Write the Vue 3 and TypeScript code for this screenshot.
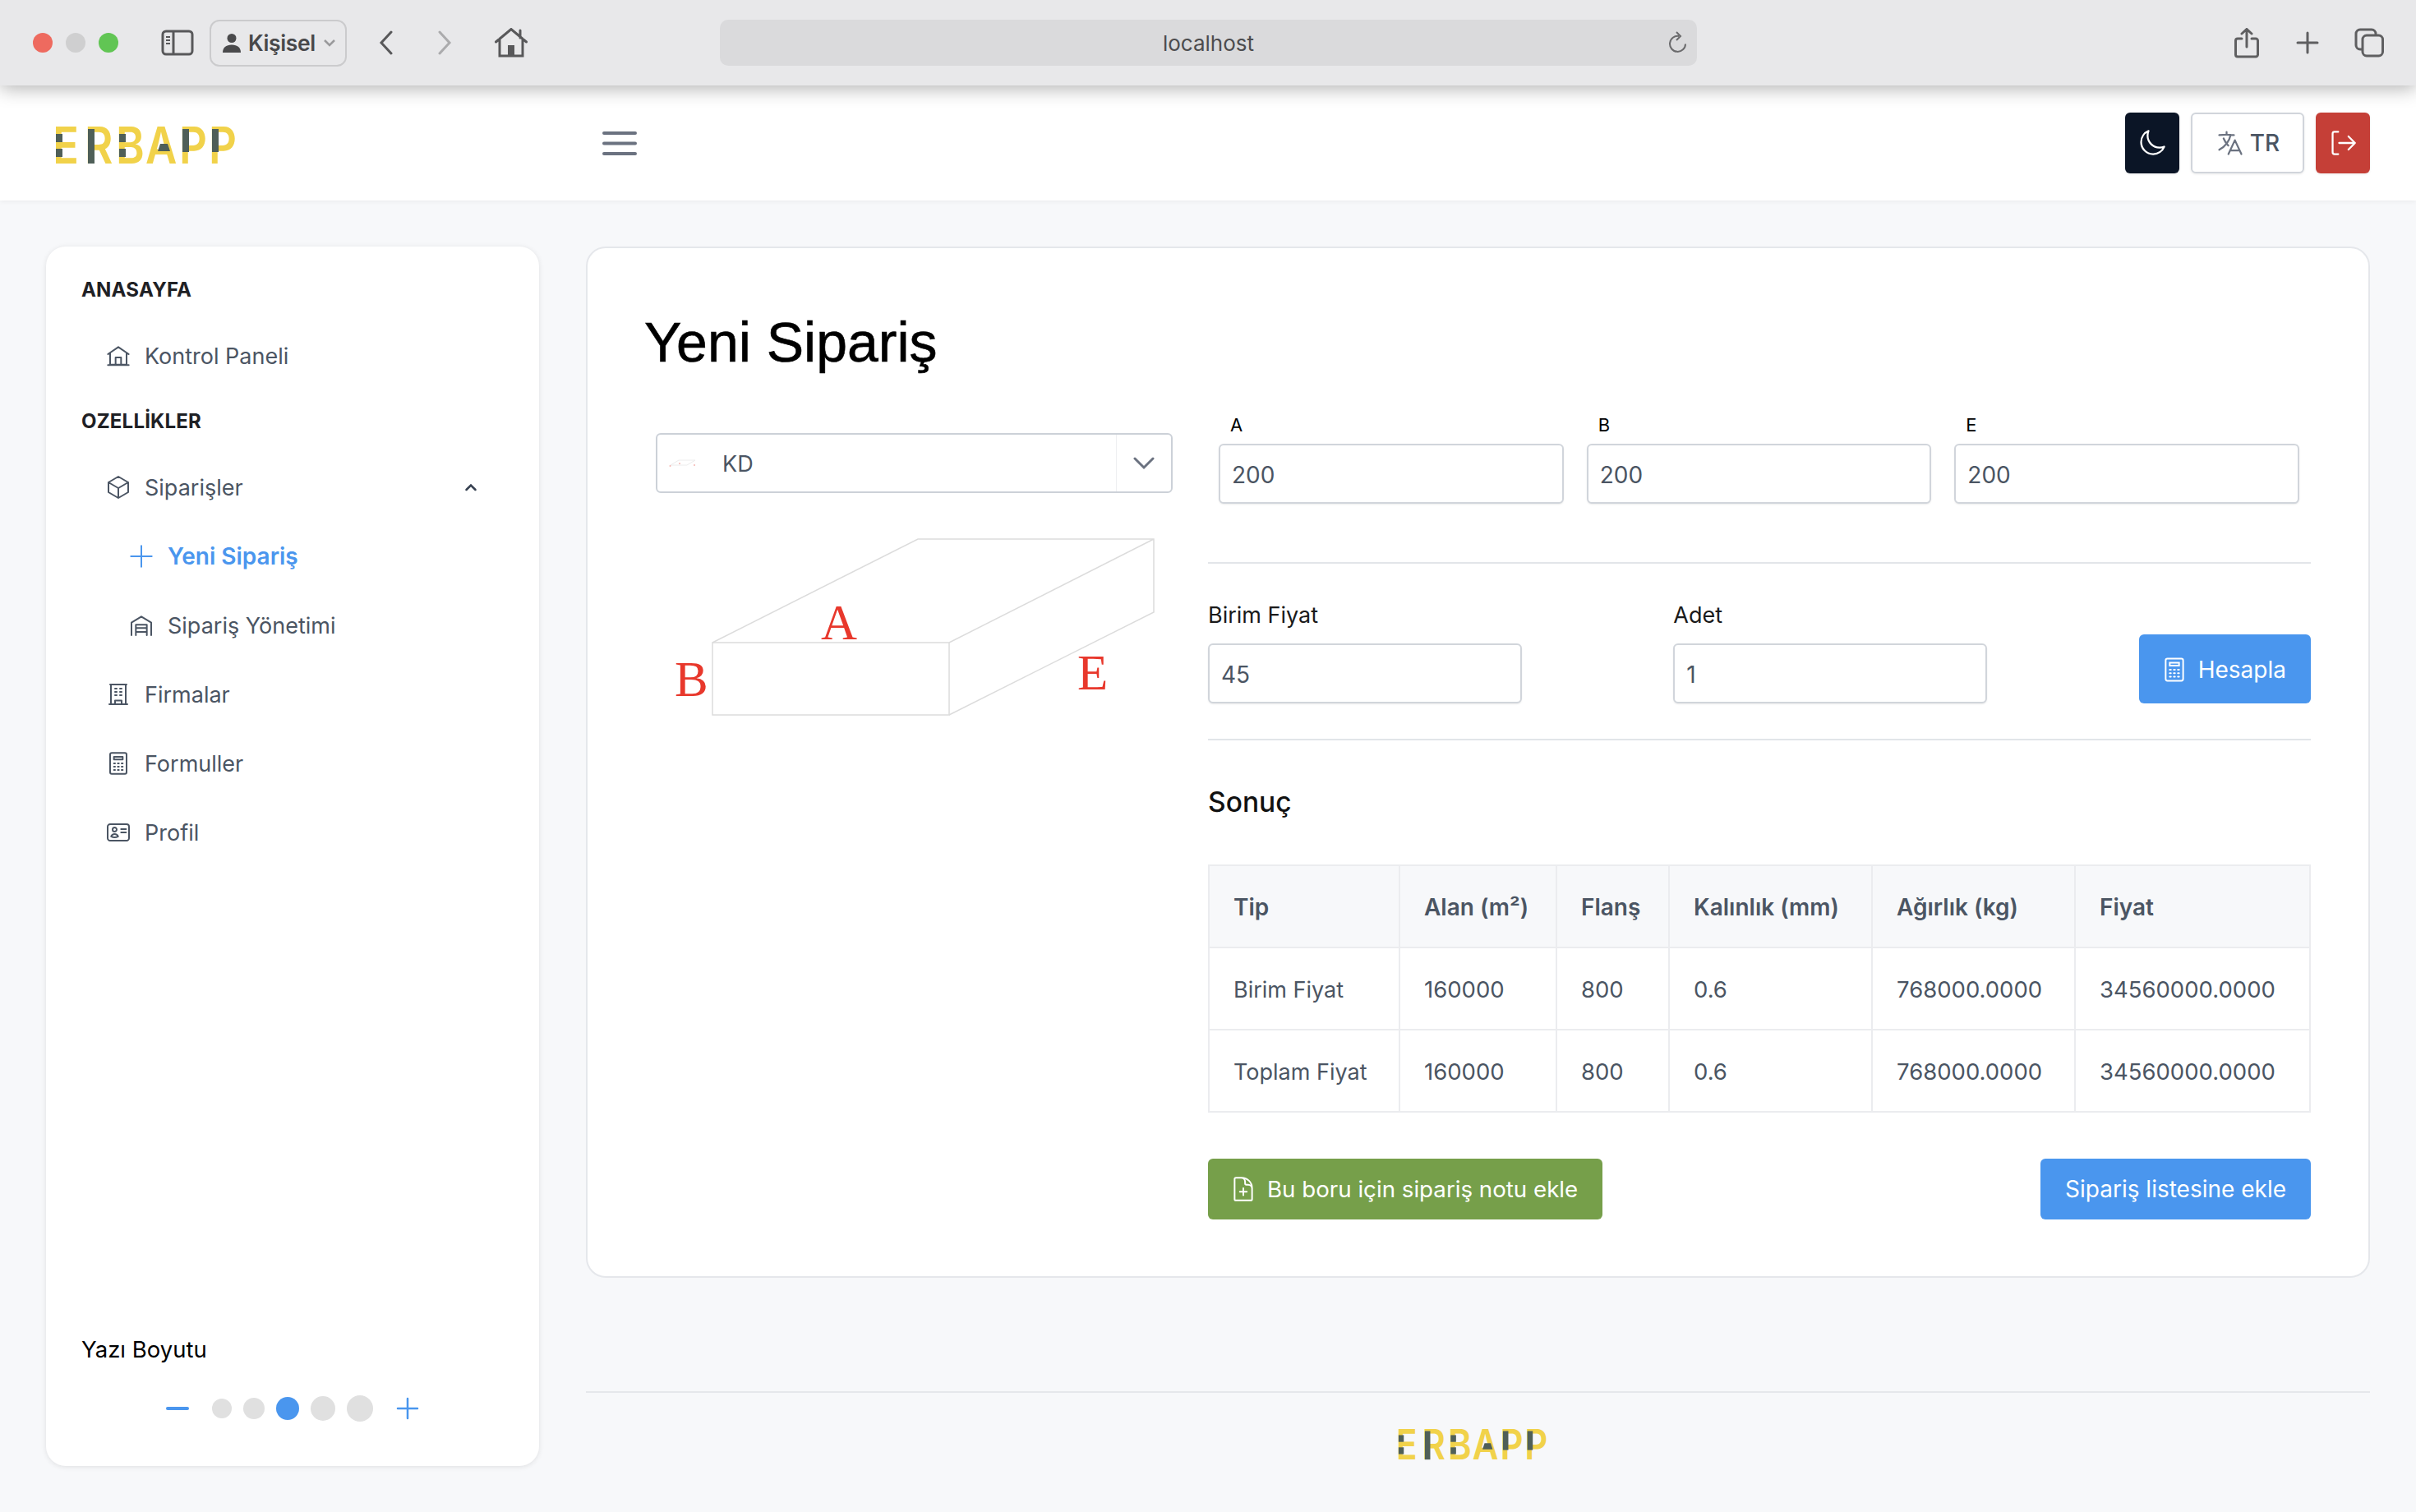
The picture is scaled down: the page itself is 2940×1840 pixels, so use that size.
<script setup lang="ts">
interface NavItem {
  label: string;
  icon: string;
  sub?: boolean;
  active?: boolean;
  open?: boolean;
}

const icons: Record<string, string> = {
  home: 'M2.500 10.500 12 4l9.500 6.500M4.500 9.500V20h15V9.500M9.500 20v-6.500h5V20M2.500 20.500h19',
  cube: 'M21 7.500l-9-5.250L3 7.500m18 0l-9 5.250m9-5.250v9l-9 5.250M3 7.500l9 5.250M3 7.500v9l9 5.250m0-9v9',
  plus: 'M12 2.500v19M2.500 12h19',
  stock: 'M3 21V9.500L12 4l9 5.500V21M7 21V11.500h10V21M7 14.500h10M7 18h10',
  building: 'M3.750 21h16.500M4.500 3h15M5.250 3v18m13.500-18v18M9 6.750h1.500m-1.500 3h1.500m-1.500 3h1.500m3-6H15m-1.500 3H15m-1.500 3H15M9 21v-3.375h6V21',
  calc: 'M6 2.500h12a1.500 1.500 0 011.500 1.500v16a1.500 1.500 0 01-1.500 1.500H6A1.500 1.500 0 014.500 20V4A1.500 1.500 0 016 2.500zM8 6h8v2.500H8zM8 12h1m2.500 0h1m2.500 0h1M8 15h1m2.500 0h1m2.500 0h1M8 18h1m2.500 0h1m2.500 0h1',
  card: 'M14.500 9h4.500M14.500 12h4.500M4.500 19.500h15a2.250 2.250 0 002.250-2.250V6.750A2.250 2.250 0 0019.500 4.500h-15a2.250 2.250 0 00-2.250 2.250v10.500A2.250 2.250 0 004.500 19.500zm6-10.125a1.875 1.875 0 11-3.750 0 1.875 1.875 0 013.750 0zm1.294 6.336a6.721 6.721 0 01-3.170.789 6.721 6.721 0 01-3.168-.789 3.376 3.376 0 016.338 0z',
};

const homeNav: NavItem[] = [{ label: 'Kontrol Paneli', icon: 'home' }];
const featureNav: NavItem[] = [
  { label: 'Siparişler', icon: 'cube', open: true },
  { label: 'Yeni Sipariş', icon: 'plus', sub: true, active: true },
  { label: 'Sipariş Yönetimi', icon: 'stock', sub: true },
  { label: 'Firmalar', icon: 'building' },
  { label: 'Formuller', icon: 'calc' },
  { label: 'Profil', icon: 'card' },
];

const sizeDots = [
  { size: 24, active: false },
  { size: 26, active: false },
  { size: 28, active: true },
  { size: 30, active: false },
  { size: 32, active: false },
];

const dimensions = [
  { label: 'A', value: '200' },
  { label: 'B', value: '200' },
  { label: 'E', value: '200' },
];

const columns = ['Tip', 'Alan (m²)', 'Flanş', 'Kalınlık (mm)', 'Ağırlık (kg)', 'Fiyat'];
const rows = [
  ['Birim Fiyat', '160000', '800', '0.6', '768000.0000', '34560000.0000'],
  ['Toplam Fiyat', '160000', '800', '0.6', '768000.0000', '34560000.0000'],
];
</script>

<template>
  <div class="page">
    <div class="browser-bar">
      <span class="light red" />
      <span class="light grey" />
      <span class="light green" />
      <svg class="tool sidebar-toggle" viewBox="0 0 40 32" fill="none" stroke="#58585a" stroke-width="3">
        <rect x="2" y="2" width="36" height="28" rx="4" />
        <path d="M15 2v28" />
        <path d="M6 9h5M6 13h5M6 17h5" stroke-width="2" />
      </svg>
      <div class="profile">
        <svg width="22" height="24" viewBox="0 0 22 24" fill="#4a4a4c">
          <circle cx="11" cy="6.500" r="5.500" />
          <path d="M0 24c0-6 4-9.500 11-9.500S22 18 22 24z" />
        </svg>
        <span>Kişisel</span>
        <svg width="16" height="10" viewBox="0 0 16 10" fill="none" stroke="#9a9a9c" stroke-width="2.500">
          <path d="M2 2l6 6 6-6" />
        </svg>
      </div>
      <svg class="tool back" viewBox="0 0 20 30" fill="none" stroke="#58585a" stroke-width="3" stroke-linecap="round">
        <path d="M16 2 4 15l12 13" />
      </svg>
      <svg class="tool forward" viewBox="0 0 20 30" fill="none" stroke="#ababad" stroke-width="3" stroke-linecap="round">
        <path d="M4 2l12 13L4 28" />
      </svg>
      <svg class="tool house" viewBox="0 0 40 36" fill="none" stroke="#58585a" stroke-width="3" stroke-linecap="round">
        <path d="M1.500 17 20 1.500 38.500 17M6 13v21h28V13M31 3v9" />
        <path d="M16 34V21h8v13z" fill="#58585a" stroke="none" />
      </svg>
      <div class="url-bar">
        <span>localhost</span>
        <svg class="reload" width="24" height="28" viewBox="0 0 24 28" fill="none" stroke="#6a6a6c" stroke-width="2">
          <path d="M14 6a9.500 9.500 0 1 0 8 9.500" />
          <path d="M11 1l5 5-5 5" />
        </svg>
      </div>
      <svg class="tool share" viewBox="0 0 30 37" fill="none" stroke="#5f5f61" stroke-width="3" stroke-linecap="round">
        <path d="M9 13H4a2.500 2.500 0 00-2.500 2.500v17A2.500 2.500 0 004 35h22a2.500 2.500 0 002.500-2.500v-17A2.500 2.500 0 0026 13h-5M15 23V2M9 7l6-5.500L21 7" />
      </svg>
      <svg class="tool new-tab" viewBox="0 0 28 28" fill="none" stroke="#5f5f61" stroke-width="3" stroke-linecap="round">
        <path d="M14 2v24M2 14h24" />
      </svg>
      <svg class="tool tabs" viewBox="0 0 36 36" fill="none" stroke="#5f5f61" stroke-width="3">
        <rect x="10" y="9" width="24.500" height="25" rx="5" />
        <path d="M10 26H7a5 5 0 01-5-5V7a5 5 0 015-5h14a5 5 0 015 5v2" />
      </svg>
    </div>

    <header class="app-header">
      <div class="logo-slot">
        <svg class="logo" viewBox="0 0 220 46">
          <symbol id="erbapp-logo" viewBox="0 0 220 46">
            <g transform="scale(0.85 1)">
              <text class="logo-text" x="-4.700 41.200 85.900 128.200 176.500 218.800" y="45">ERBAPP</text>
            </g>
            <rect class="logo-dark" x="0" y="9" width="8" height="10" />
            <rect class="logo-dark" x="0" y="27" width="8" height="10" />
            <rect class="logo-dark" x="39" y="3" width="8" height="42" />
            <rect class="logo-dark" x="77" y="9" width="8" height="10" />
            <rect class="logo-dark" x="77" y="27" width="8" height="10" />
            <polygon class="logo-dark" points="127,21 136,21 139,30 124,30" />
            <rect class="logo-dark" x="154" y="3" width="8" height="28" />
            <rect class="logo-dark" x="190" y="3" width="8" height="28" />
          </symbol>
          <use href="#erbapp-logo" />
        </svg>
      </div>
      <svg class="hamburger" width="42" height="29" viewBox="0 0 42 29" stroke="#6b7280" stroke-width="4" stroke-linecap="round">
        <path d="M2 2h38M2 14.500h38M2 27h38" />
      </svg>
      <div class="header-actions">
        <button class="action dark">
          <svg width="36" height="36" viewBox="0 0 24 24" fill="none" stroke="#fff" stroke-width="1.500" stroke-linecap="round" stroke-linejoin="round">
            <path d="M21.752 15.002A9.718 9.718 0 0118 15.750c-5.385 0-9.750-4.365-9.750-9.750 0-1.330.266-2.597.748-3.752A9.753 9.753 0 003 11.250C3 16.635 7.365 21 12.750 21a9.753 9.753 0 009.002-5.998z" />
          </svg>
        </button>
        <button class="action lang">
          <svg width="36" height="36" viewBox="0 0 24 24" fill="none" stroke="#6b7280" stroke-width="1.500" stroke-linecap="round" stroke-linejoin="round">
            <path d="M10.500 21l5.250-11.250L21 21m-9-3h7.500M3 5.621a48.474 48.474 0 016-.371m0 0c1.120 0 2.233.038 3.334.114M9 5.250V3m3.334 2.364C11.176 10.658 7.690 15.080 3 17.502m9.334-12.138c.896.061 1.785.147 2.666.257m-4.589 8.495a18.023 18.023 0 01-3.827-5.802" />
          </svg>
          <span>TR</span>
        </button>
        <button class="action exit">
          <svg width="34" height="34" viewBox="0 0 30 30" fill="none" stroke="#fff" stroke-width="2" stroke-linecap="round" stroke-linejoin="round">
            <path d="M10 3H6a2 2 0 00-2 2v20a2 2 0 002 2h4M11 15h17M21 8l7 7-7 7" />
          </svg>
        </button>
      </div>
    </header>

    <div class="layout">
      <aside class="sidebar">
        <nav>
          <div class="nav-title first">ANASAYFA</div>
          <div v-for="item in homeNav" :key="item.label" class="nav-item">
            <svg class="nav-icon" viewBox="0 0 24 24" fill="none" stroke="currentColor" stroke-width="1.500" stroke-linecap="round" stroke-linejoin="round">
              <path :d="icons[item.icon]" />
            </svg>
            <span>{{ item.label }}</span>
          </div>
          <div class="nav-title">OZELLİKLER</div>
          <div
            v-for="item in featureNav"
            :key="item.label"
            class="nav-item"
            :class="{ sub: item.sub, active: item.active }"
          >
            <svg class="nav-icon" viewBox="0 0 24 24" fill="none" stroke="currentColor" stroke-width="1.500" stroke-linecap="round" stroke-linejoin="round">
              <path :d="icons[item.icon]" />
            </svg>
            <span>{{ item.label }}</span>
            <svg v-if="item.open" class="caret" width="16" height="10" viewBox="0 0 16 10" fill="none" stroke="#374151" stroke-width="2.500" stroke-linecap="round">
              <path d="M2.500 8 8 2.500 13.500 8" />
            </svg>
          </div>
        </nav>
        <div class="font-size">
          <div class="font-size-label">Yazı Boyutu</div>
          <div class="font-size-control">
            <svg width="28" height="4" viewBox="0 0 28 4"><rect width="28" height="4" rx="2" fill="#4a96ee" /></svg>
            <span
              v-for="dot in sizeDots"
              :key="dot.size"
              class="dot"
              :class="{ on: dot.active }"
              :style="{ width: dot.size + 'px', height: dot.size + 'px' }"
            />
            <svg width="28" height="28" viewBox="0 0 28 28" stroke="#4a96ee" stroke-width="2.500" stroke-linecap="round">
              <path d="M14 2v24M2 14h24" />
            </svg>
          </div>
        </div>
      </aside>

      <div class="content">
        <main class="card">
          <h1>Yeni Sipariş</h1>
          <div class="card-body">
            <section class="left-col">
              <div class="select">
                <svg width="34" height="12" viewBox="0 0 34 12" fill="none" stroke="#ececec">
                  <path d="M2 8 12 2h20M2 8h20l10-6" />
                  <circle cx="13" cy="6" r="1" fill="#f4b5b0" stroke="none" />
                  <circle cx="1.500" cy="9" r="1" fill="#f4b5b0" stroke="none" />
                  <circle cx="31" cy="8" r="1" fill="#f4b5b0" stroke="none" />
                </svg>
                <span class="select-value">KD</span>
                <span class="select-arrow">
                  <svg width="26" height="16" viewBox="0 0 26 16" fill="none" stroke="#6b7280" stroke-width="3" stroke-linecap="round">
                    <path d="M2 2l11 11L24 2" />
                  </svg>
                </span>
              </div>
              <svg class="diagram" viewBox="0 0 628 240" fill="none" stroke="#dcdcdc" stroke-width="1.500">
                <rect x="69" y="142" width="288" height="88" />
                <path d="M69 142 319 16h287v89L357 230M357 142 606 16" />
                <text class="diagram-label" x="223" y="138" text-anchor="middle">A</text>
                <text class="diagram-label" x="23" y="207">B</text>
                <text class="diagram-label" x="513" y="199">E</text>
              </svg>
            </section>

            <section class="right-col">
              <div class="dimension-row">
                <label v-for="dim in dimensions" :key="dim.label" class="dimension">
                  <span>{{ dim.label }}</span>
                  <input class="input" type="text" :value="dim.value" />
                </label>
              </div>
              <hr class="rule first-rule" />
              <div class="price-row">
                <label class="field">
                  <span>Birim Fiyat</span>
                  <input class="input" type="text" value="45" />
                </label>
                <label class="field">
                  <span>Adet</span>
                  <input class="input" type="text" value="1" />
                </label>
                <button class="btn blue calc-btn">
                  <svg width="34" height="34" viewBox="0 0 24 24" fill="none" stroke="#fff" stroke-width="1.400" stroke-linecap="round">
                    <path :d="icons.calc" />
                  </svg>
                  Hesapla
                </button>
              </div>
              <hr class="rule" />
              <h2>Sonuç</h2>
              <table class="result">
                <thead>
                  <tr>
                    <th v-for="col in columns" :key="col">{{ col }}</th>
                  </tr>
                </thead>
                <tbody>
                  <tr v-for="row in rows" :key="row[0]">
                    <td v-for="(cell, i) in row" :key="i">{{ cell }}</td>
                  </tr>
                </tbody>
              </table>
              <div class="actions">
                <button class="btn green">
                  <svg width="34" height="34" viewBox="0 0 24 24" fill="none" stroke="#fff" stroke-width="1.400" stroke-linecap="round" stroke-linejoin="round">
                    <path d="M19.500 14.250v-2.625a3.375 3.375 0 00-3.375-3.375h-1.500A1.125 1.125 0 0113.500 7.125v-1.500a3.375 3.375 0 00-3.375-3.375H8.250m3.750 9v6m3-3H9m1.500-12H5.625c-.621 0-1.125.504-1.125 1.125v17.250c0 .621.504 1.125 1.125 1.125h12.750c.621 0 1.125-.504 1.125-1.125V11.250a9 9 0 00-9-9z" />
                  </svg>
                  Bu boru için sipariş notu ekle
                </button>
                <button class="btn blue">Sipariş listesine ekle</button>
              </div>
            </section>
          </div>
        </main>
        <footer class="app-footer">
          <svg class="logo small" viewBox="0 0 220 46"><use href="#erbapp-logo" /></svg>
        </footer>
      </div>
    </div>
  </div>
</template>

<style>
html,
body {
  margin: 0;
  background: #f7f8fa;
}
</style>

<style scoped>
.page {
  height: 1840px;
  overflow: hidden;
  background: #f7f8fa;
  font-family: Inter, "Liberation Sans", sans-serif;
  font-size: 28px;
  color: #4b5563;
}

.browser-bar {
  position: relative;
  z-index: 2;
  display: flex;
  align-items: center;
  height: 104px;
  padding: 0 39px 0 40px;
  box-sizing: border-box;
  background: #e8e8ea;
  box-shadow: 0 3px 22px rgba(0, 0, 0, 0.32);
}

.light {
  width: 24px;
  height: 24px;
  border-radius: 50%;
  margin-right: 16px;
  flex-shrink: 0;
}

.light.red { background: #ee6a5f; }
.light.grey { background: #cfcfd0; }
.light.green { background: #61c554; margin-right: 0; }

.tool { flex-shrink: 0; }
.sidebar-toggle { width: 40px; height: 32px; margin-left: 52px; }
.back { width: 20px; height: 30px; margin-left: 38px; }
.forward { width: 20px; height: 30px; margin-left: 51px; }
.house { width: 40px; height: 36px; margin-left: 51px; }
.share { width: 30px; height: 37px; margin-left: auto; }
.new-tab { width: 28px; height: 28px; margin-left: 45px; }
.tabs { width: 36px; height: 36px; margin-left: 43px; }

.profile {
  display: flex;
  align-items: center;
  gap: 9px;
  width: 167px;
  height: 57px;
  margin-left: 19px;
  padding-left: 14px;
  box-sizing: border-box;
  border: 2px solid #cbcbcd;
  border-radius: 12px;
  color: #48484a;
  font-size: 26.500px;
  font-weight: 600;
  letter-spacing: -0.4px;
}

.url-bar {
  position: relative;
  display: flex;
  align-items: center;
  justify-content: center;
  width: 1189px;
  height: 56px;
  margin-left: 234px;
  border-radius: 10px;
  background: #dadadc;
  color: #4c4c4e;
  font-size: 26px;
}

.reload {
  position: absolute;
  right: 12px;
  top: 14px;
}

.app-header {
  position: relative;
  z-index: 1;
  display: flex;
  align-items: center;
  height: 140px;
  padding: 0 56px 0 68px;
  box-sizing: border-box;
  background: #fff;
  box-shadow: 0 1px 6px rgba(0, 0, 0, 0.06);
}

.logo-slot {
  display: flex;
  width: 665px;
  padding-top: 5px;
}

.logo {
  width: 220px;
  height: 46px;
  overflow: visible;
}

.logo.small {
  width: 183px;
  height: 38px;
  margin-right: 13px;
}

.logo-text {
  font-family: Inter, sans-serif;
  font-size: 62px;
  font-weight: 600;
  fill: #f1d24a;
}

.logo-dark {
  fill: #4f5f58;
}

.header-actions {
  display: flex;
  gap: 14px;
  margin-left: auto;
}

.action {
  display: flex;
  align-items: center;
  justify-content: center;
  height: 74px;
  width: 66px;
  padding: 0;
  border: none;
  border-radius: 6px;
  font: inherit;
  box-shadow: 0 1px 3px rgba(0, 0, 0, 0.08);
}

.action.dark { background: #0b1526; }
.action.exit { background: #c53f37; }

.action.lang {
  width: 138px;
  gap: 6px;
  border: 2px solid #d1d5db;
  background: #fff;
  color: #4b5563;
  font-weight: 500;
}

.layout {
  display: flex;
  align-items: flex-start;
  gap: 57px;
  padding: 56px 56px 0;
}

.sidebar {
  display: flex;
  flex-direction: column;
  justify-content: space-between;
  flex-shrink: 0;
  width: 600px;
  height: 1484px;
  box-sizing: border-box;
  padding: 33px 43px 53px;
  border-radius: 24px;
  background: #fff;
  box-shadow: 0 1px 6px rgba(0, 0, 0, 0.1);
}

.nav-title {
  height: 40px;
  margin: 18px 0 18px;
  line-height: 40px;
  font-size: 24px;
  font-weight: 700;
  letter-spacing: 0.2px;
  color: #1f2125;
}

.nav-title.first {
  margin-top: 0;
}

.nav-item {
  display: flex;
  align-items: center;
  height: 84px;
  padding-left: 29px;
  font-size: 27px;
  color: #4b5563;
}

.nav-item.sub {
  padding-left: 57px;
}

.nav-item.active {
  color: #4a96ee;
  font-size: 28px;
  font-weight: 600;
}

.nav-icon {
  width: 32px;
  height: 32px;
  margin-right: 16px;
  flex-shrink: 0;
}

.caret {
  margin-left: auto;
  margin-right: 32px;
}

.font-size-label {
  color: #000;
  font-size: 27.500px;
  line-height: 34px;
  margin-bottom: 38px;
}

.font-size-control {
  display: flex;
  align-items: center;
  justify-content: center;
  gap: 14px;
  height: 34px;
}

.font-size-control svg:first-child {
  margin-right: 14px;
}

.font-size-control svg:last-child {
  margin-left: 14px;
}

.dot {
  border-radius: 50%;
  background: #e0e0e0;
}

.dot.on {
  background: #4a96ee;
}

.content {
  flex: 1;
  min-width: 0;
}

.card {
  display: block;
  box-sizing: border-box;
  height: 1255px;
  padding: 71px 70px 0 69px;
  border: 2px solid #e5e7eb;
  border-radius: 24px;
  background: #fff;
}

h1 {
  margin: 0 0 44px;
  height: 86px;
  line-height: 86px;
  font-family: "Liberation Sans", sans-serif;
  font-size: 68px;
  font-weight: 400;
  color: #000;
  -webkit-text-stroke: 0.6px #000;
}

.card-body {
  display: flex;
  gap: 29px;
}

.left-col {
  width: 657px;
  box-sizing: border-box;
  padding: 24px 14px 0;
  flex-shrink: 0;
}

.select {
  display: flex;
  align-items: center;
  height: 73px;
  box-sizing: border-box;
  padding: 0 0 0 14px;
  border: 2px solid #ccd1d8;
  border-radius: 6px;
}

.select-value {
  margin-left: 31px;
  padding-top: 2px;
  font-size: 27px;
}

.select-arrow {
  display: flex;
  align-items: center;
  justify-content: center;
  width: 66px;
  height: 100%;
  margin-left: auto;
  border-left: 1px solid #eeeff1;
}

.diagram {
  display: block;
  width: 628px;
  height: 240px;
  margin-top: 40px;
}

.diagram-label {
  font-family: "Liberation Serif", serif;
  font-size: 61px;
  fill: #e8382c;
  stroke: none;
}

.right-col {
  flex: 1;
  min-width: 0;
}

.dimension-row {
  display: flex;
  gap: 28px;
  padding: 0 14px 0 13px;
}

.dimension {
  display: block;
  flex: 1;
  color: #000;
  font-size: 22px;
}

.dimension span {
  display: block;
  height: 28px;
  margin-bottom: 9px;
  padding-left: 14px;
  font-weight: 400;
  line-height: 28px;
}

.input {
  display: block;
  width: 100%;
  height: 73px;
  box-sizing: border-box;
  padding: 2px 14px 0;
  border: 2px solid #d1d5db;
  border-radius: 6px;
  background: #fff;
  box-shadow: 0 1px 2px rgba(0, 0, 0, 0.08);
  font: inherit;
  font-size: 28px;
  color: #4b5563;
  outline: none;
}

.rule {
  height: 2px;
  margin: 0;
  border: none;
  background: #e2e5e9;
}

.first-rule {
  margin-top: 71px;
}

.price-row {
  display: flex;
  align-items: flex-end;
  justify-content: space-between;
  margin: 46px 0 43px;
}

.field {
  display: block;
  width: 382px;
  font-size: 27px;
  color: #1a1a1a;
}

.field span {
  display: block;
  height: 34px;
  margin-bottom: 17px;
  line-height: 34px;
}

.btn {
  display: flex;
  align-items: center;
  gap: 12px;
  height: 74px;
  padding: 0 30px;
  border: none;
  border-radius: 6px;
  color: #fff;
  font: inherit;
}

.btn.blue { background: #4a96ee; }

.btn.green {
  padding-left: 26px;
  background: #769f4a;
  font-size: 27.700px;
}

.btn.calc-btn {
  height: 84px;
  gap: 12px;
  padding-top: 2px;
  padding-left: 26px;
}

h2 {
  margin: 53px 0 54px;
  height: 44px;
  line-height: 44px;
  font-size: 33.500px;
  font-weight: 500;
  color: #111;
}

.result {
  width: 100%;
  table-layout: fixed;
  border-collapse: collapse;
}

.result th,
.result td {
  height: 100px;
  padding: 2px 0 0 29px;
  box-sizing: border-box;
  border: 2px solid #ebecef;
  text-align: left;
  white-space: nowrap;
}

.result th {
  background: #f7f8fa;
  font-weight: 600;
  color: #4b5563;
}

.result td {
  font-size: 27px;
}

.result td:not(:first-child) {
  font-size: 27.500px;
}

.result th:nth-child(1) { width: 232px; }
.result th:nth-child(2) { width: 191px; }
.result th:nth-child(3) { width: 137px; }
.result th:nth-child(4) { width: 247px; }
.result th:nth-child(5) { width: 247px; }

.actions {
  display: flex;
  justify-content: space-between;
  margin-top: 56px;
}

.app-footer {
  display: flex;
  justify-content: center;
  margin-top: 138px;
  padding-top: 44px;
  border-top: 2px solid #e5e7eb;
}
</style>
